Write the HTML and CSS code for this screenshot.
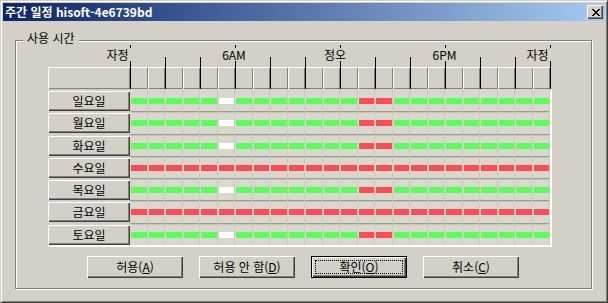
FILE: index.html
```html
<!DOCTYPE html>
<html lang="ko">

    <head>
        <meta charset="UTF-8">
        <meta name="viewport" content="width=device-width, initial-scale=1.0">
        <title>주간 일정</title>
        <link rel="stylesheet" href="styles.css">
    </head>

    <body>
        <div class="window">
            <div class="titlebar">
                <span class="title">주간 일정 hisoft-4e6739bd</span>
                <div class="close">
                    <svg width="9" height="7" viewBox="0 0 9 7" shape-rendering="crispEdges">
                        <path d="M0 0h2l2.5 2.5L7 0h2L5.5 3.5 9 7H7L4.5 4.5 2 7H0l3.5-3.5z" fill="#000"/>
                    </svg>
                </div>
            </div>
            <div class="body">
                <div class="group">
                    <span class="group-title">사용 시간</span>
                    <div class="chart">
                        <div class="axis" id="axis"></div>
                        <div class="header-row">
                            <div class="corner"></div>
                            <div class="hours" id="hours"></div>
                        </div>
                        <div class="days" id="days"></div>
                    </div>
                    <div class="actions">
                        <div class="btn">허용(<u>A</u>)</div>
                        <div class="btn">허용 안 함(<u>D</u>)</div>
                        <div class="btn default">확인(<u>O</u>)</div>
                        <div class="btn">취소(<u>C</u>)</div>
                    </div>
                </div>
            </div>
        </div>

        <script>
            var names = ['일요일', '월요일', '화요일', '수요일', '목요일', '금요일', '토요일'];
            // g 허용, r 거부, w 비어 있음
            var normal = 'gggggwgggggggrrggggggggg';
            var denied = 'rrrrrrrrrrrrrrrrrrrrrrrr';
            var plan = [normal, normal, normal, denied, normal, denied, normal];
            var kinds = { g: 'on', r: 'off', w: 'blank' };

            var labels = [
                { text: '자정', x: 69.5 },
                { text: '6AM', x: 186 },
                { text: '정오', x: 287 },
                { text: '6PM', x: 396.5 },
                { text: '자정', x: 489.5 }
            ];

            var axis = document.getElementById('axis');
            for (var h = 0; h <= 24; h += 2) {
                var tick = document.createElement('div');
                tick.className = h % 6 == 0 ? 'tick long' : 'tick';
                tick.style.left = (82 + h * 17.5) + 'px';
                axis.appendChild(tick);
            }
            labels.forEach(function (item) {
                var label = document.createElement('span');
                label.className = 'label';
                label.textContent = item.text;
                label.style.left = item.x + 'px';
                axis.appendChild(label);
            });

            var hours = document.getElementById('hours');
            for (var i = 0; i < 24; i++) {
                var hour = document.createElement('div');
                hour.className = 'hour';
                hours.appendChild(hour);
            }

            var days = document.getElementById('days');
            for (var d = 0; d < names.length; d++) {
                var row = document.createElement('div');
                row.className = 'day';
                var btn = document.createElement('div');
                btn.className = 'day-btn';
                btn.textContent = names[d];
                row.appendChild(btn);
                var cells = document.createElement('div');
                cells.className = 'cells';
                for (var j = 0; j < 24; j++) {
                    var cell = document.createElement('div');
                    cell.className = 'cell';
                    var bar = document.createElement('div');
                    bar.className = 'bar ' + kinds[plan[d][j]];
                    cell.appendChild(bar);
                    cells.appendChild(cell);
                }
                row.appendChild(cells);
                days.appendChild(row);
            }
        </script>
    </body>

</html>
```

FILE: styles.css
```css
* {
    margin: 0;
    padding: 0;
    box-sizing: border-box;
}

body {
    background: #d4d0c8;
    font-family: "Noto Sans CJK KR", sans-serif;
    font-size: 12px;
    color: #000;
}

.window {
    width: 608px;
    height: 303px;
    padding: 2px;
    background: #d4d0c8;
    border: 1px solid;
    border-color: #d4d0c8 #404040 #404040 #d4d0c8;
    box-shadow: inset 1px 1px #fff, inset -1px -1px #808080;
}

.titlebar {
    display: flex;
    align-items: center;
    justify-content: space-between;
    height: 18px;
    padding: 0 2px;
    background: linear-gradient(to right, #0a246a, #a6caf0);
    color: #fff;
    font-weight: bold;
    line-height: 18px;
}

.close {
    display: flex;
    align-items: center;
    justify-content: center;
    width: 16px;
    height: 14px;
    background: #d4d0c8;
    box-shadow: inset 1px 1px #fff, inset -1px -1px #404040, inset -2px -2px #808080;
}

.close svg {
    display: block;
}

.body {
    padding: 19px 13px 0 12px;
}

.group {
    position: relative;
    height: 249px;
    border: 1px solid #808080;
    box-shadow: inset 1px 1px #fff, 1px 1px #fff;
}

.group-title {
    position: absolute;
    top: -11px;
    left: 7px;
    padding: 0 4px;
    background: #d4d0c8;
    line-height: 16px;
}

.chart {
    position: relative;
    width: 504px;
    margin-left: 32px;
}

.axis {
    height: 26px;
}

.tick {
    position: absolute;
    top: 16px;
    width: 1px;
    height: 32px;
    background: #000;
}

.tick.long {
    top: 4px;
    height: 44px;
}

.label {
    position: absolute;
    top: 7px;
    padding: 0 3px;
    background: #d4d0c8;
    line-height: 13px;
    white-space: nowrap;
    transform: translateX(-50%);
}

.header-row {
    display: flex;
    height: 22px;
}

.corner {
    width: 82px;
    box-shadow: inset 1px 1px #fff, inset -1px -1px #808080;
}

.hours {
    display: grid;
    grid-template-columns: repeat(24, 1fr);
    width: 420px;
}

.hour {
    box-shadow: inset 1px 1px #fff, inset -1px -1px #808080;
}

.days {
    border-bottom: 2px solid #fff;
}

.day {
    display: flex;
    height: 22.3px;
}

.day-btn {
    width: 82px;
    height: 20px;
    margin-top: 2px;
    text-align: center;
    line-height: 20px;
    box-shadow: inset 1px 1px #fff, inset -1px -1px #404040, inset -2px -2px #808080;
}

.cells {
    display: grid;
    grid-template-columns: repeat(24, 1fr);
    width: 422px;
    border-right: 2px solid #fff;
    background: #d9d8cd;
}

.day + .day .cells {
    box-shadow: inset 0 1px #9d9a90, inset 0 2px #c6c4ba;
}

.cell {
    padding-top: 9px;
    box-shadow: inset -1px 0 #cbc9bf;
}

.bar {
    height: 6px;
    margin: 0 1px;
}

.bar.on {
    background: #58ff58;
}

.bar.off {
    background: #ff4b55;
}

.bar.blank {
    background: #fff;
}

.actions {
    display: flex;
    justify-content: center;
    gap: 16px;
    margin-top: 9px;
    padding-right: 1px;
}

.btn {
    width: 96px;
    height: 22px;
    background: #d4d0c8;
    text-align: center;
    line-height: 22px;
    box-shadow: inset 1px 1px #fff, inset -1px -1px #404040, inset -2px -2px #808080;
}

.btn.default {
    position: relative;
    border: 1px solid #000;
    line-height: 20px;
}

.btn.default::after {
    content: '';
    position: absolute;
    top: 3px;
    right: 3px;
    bottom: 3px;
    left: 3px;
    border: 1px dotted #000;
}
```
